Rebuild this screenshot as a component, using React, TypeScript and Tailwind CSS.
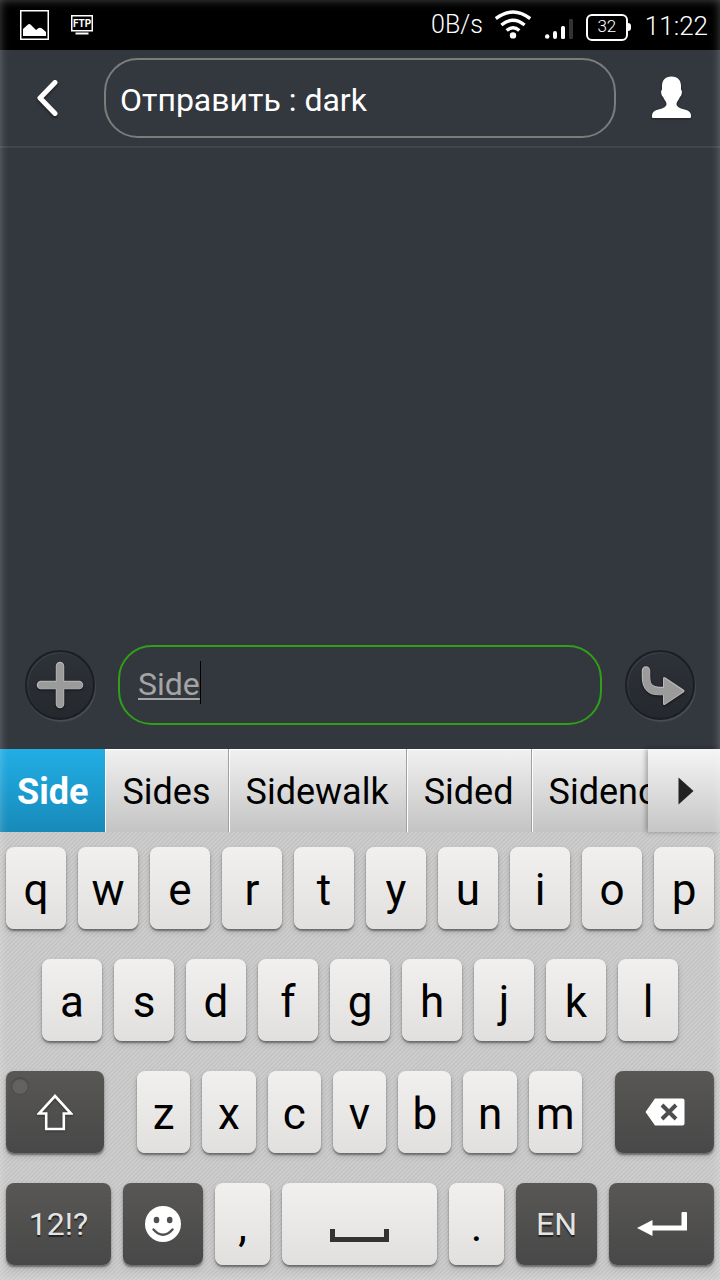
import type { ReactNode } from "react";

const LIGHT_KEY =
  "flex h-[82px] min-w-0 items-center justify-center rounded-lg bg-linear-to-b from-[#f1f0ef] to-[#e1e0df] text-[44px] leading-[52px] text-black shadow-[0_2px_2px_rgba(0,0,0,0.4),0_3px_6px_rgba(0,0,0,0.15)]";
const DARK_KEY =
  "relative flex h-[82px] min-w-0 items-center justify-center rounded-lg bg-linear-to-b from-[#585755] to-[#484848] text-[32px] text-[#e4e4e4] shadow-[0_2px_2px_rgba(0,0,0,0.4),0_3px_6px_rgba(0,0,0,0.15)]";

function Letter({ children }: { children: string }) {
  return (
    <button type="button" className={`${LIGHT_KEY} flex-1 pt-1`}>
      {children}
    </button>
  );
}

function DarkKey({ label, size, children }: { label: string; size: string; children: ReactNode }) {
  return (
    <button type="button" aria-label={label} className={`${DARK_KEY} ${size}`}>
      {children}
    </button>
  );
}

function StatusBar() {
  return (
    <div className="flex h-[50px] items-center justify-between bg-black pr-3 pl-5 text-white">
      <div className="flex items-center gap-[22px]">
        <svg width="29" height="30" viewBox="0 0 29 30" aria-hidden="true">
          <rect x="0.75" y="0.75" width="27.5" height="28.5" fill="none" stroke="#fff" strokeWidth="1.5" />
          <path d="M3 26V19L8 14.5Q9.5 13.5 11 15L16 20L18 18.5Q20 17 22 18.5L26 22V26Z" fill="#fff" />
        </svg>
        <svg width="22" height="20" viewBox="0 0 22 20" aria-label="FTP" role="img">
          <rect x="0.75" y="0.75" width="20.5" height="15" fill="none" stroke="#fff" strokeWidth="1.5" />
          <text x="11" y="12" textAnchor="middle" fontSize="10" fontWeight="700" fill="#fff" className="font-[Roboto,sans-serif]">
            FTP
          </text>
          <rect x="4.5" y="17.5" width="13" height="2" fill="#fff" />
        </svg>
      </div>
      <div className="flex items-center">
        <span className="text-[25px] font-light">0B/s</span>
        <svg className="ml-3" width="36" height="30" viewBox="0 0 36 30" fill="none" stroke="#fff" strokeWidth="3.4" aria-hidden="true">
          <path d="M0.8 8.6Q18 -4.6 35.2 8.6" />
          <path d="M6.4 15Q18 5.4 29.6 15" />
          <path d="M11.7 20.6Q18 14.8 24.3 20.6" />
          <circle cx="18" cy="25.4" r="3.2" fill="#fff" stroke="none" />
        </svg>
        <svg className="ml-[14px]" width="29" height="30" viewBox="0 0 29 30" aria-hidden="true">
          <circle cx="2.2" cy="26.5" r="2.2" fill="#fff" />
          <rect x="8" y="21" width="4" height="8" rx="2" fill="#fff" />
          <rect x="16" y="16" width="4" height="13" rx="1.5" fill="#fff" />
          <rect x="24" y="9" width="4" height="20" rx="1" fill="#333" />
        </svg>
        <div className="ml-[12px] flex items-center pt-1">
          <div className="flex h-[27px] w-[42px] items-center justify-center rounded-[6px] border-2 border-white text-[17px] font-light">
            32
          </div>
          <div className="h-2 w-[3px] rounded-r-sm bg-white" />
        </div>
        <span className="ml-[14px] pt-[2px] text-[26px] font-light">11:22</span>
      </div>
    </div>
  );
}

function Header() {
  return (
    <header className="flex h-[98px] items-center border-b-2 border-[#41454e]">
      <button type="button" aria-label="Назад" className="flex w-[104px] justify-center pr-[10px]">
        <svg width="26" height="40" viewBox="0 0 26 40" className="drop-shadow-[0_2px_1px_rgba(0,0,0,0.4)]">
          <path d="M21 4.5L6 20L21 35.5" fill="none" stroke="#fff" strokeWidth="5" strokeLinecap="round" strokeLinejoin="round" />
        </svg>
      </button>
      <input
        type="text"
        aria-label="Получатель"
        defaultValue="Отправить : dark"
        className="h-20 min-w-0 flex-1 rounded-[34px] border-2 border-[#7b7c7b] bg-transparent px-[14px] pt-1 text-[32px] text-white caret-transparent outline-none"
      />
      <button type="button" aria-label="Контакт" className="flex w-[104px] justify-center pl-[7px]">
        <svg width="40" height="44" viewBox="0 0 40 44" className="drop-shadow-[0_1px_1px_rgba(0,0,0,0.4)]">
          <path
            d="M19.5 0.5C26 0.5 29 4.5 29 10V13.5Q30.4 15 29.8 17.5Q29.3 20 28 20.8Q27 23.5 25 26Q24 28 24.8 29.5Q26 31.5 29 32.5L35 34.2Q39 36 39 39.5V40.8Q39 42 38 42H1Q0 42 0 40.8V39.5Q0 36 4 34.2L10 32.5Q13 31.5 14.2 29.5Q15 28 14 26Q12 23.5 11 20.8Q9.7 20 9.2 17.5Q8.6 15 10 13.5V10C10 4.5 13 0.5 19.5 0.5Z"
            fill="#fff"
          />
        </svg>
      </button>
    </header>
  );
}

const ROUND_BUTTON =
  "flex size-[70px] shrink-0 items-center justify-center rounded-full border-2 border-[#1b1f25] bg-linear-to-b from-[#2e3239] to-[#25282d] shadow-[1px_2px_1px_#484c53,inset_1px_1px_1px_#3c4047]";

function Composer() {
  return (
    <form className="flex items-center px-[25px] pb-6" onSubmit={(e) => e.preventDefault()}>
      <button type="button" aria-label="Добавить" className={ROUND_BUTTON}>
        <svg width="48" height="48" viewBox="0 0 48 48" className="drop-shadow-[0_1px_1px_rgba(0,0,0,0.6)]">
          <path d="M24 5V43M5 24H43" stroke="#b8b8b8" strokeWidth="8.5" strokeLinecap="round" />
          <path d="M24 5.5V43M5.5 24.3H43" stroke="#9b9b9b" strokeWidth="7" strokeLinecap="round" />
        </svg>
      </button>
      <div className="relative mx-[23px] min-w-0 flex-1">
        <input
          type="text"
          aria-label="Сообщение"
          defaultValue="Side"
          className="h-20 w-full rounded-[34px] border-2 border-[#30a016] bg-transparent px-[18px] pb-[3px] text-[32px] text-[#a5a5a5] underline decoration-2 underline-offset-[3px] caret-transparent outline-none"
        />
        <span className="absolute top-4 left-[82px] h-[43px] w-px bg-black" />
      </div>
      <button type="submit" aria-label="Отправить" className={ROUND_BUTTON}>
        <svg width="52" height="42" viewBox="0 0 52 42" className="drop-shadow-[0_1px_1px_rgba(0,0,0,0.6)]">
          <path d="M12 6.5V13Q12 27 25 27H31" fill="none" stroke="#b8b8b8" strokeWidth="8.5" strokeLinecap="round" />
          <path d="M29 14.5Q29 12 31.5 13.5L49.5 25.5Q51.5 27 49.5 28.5L31.5 40.5Q29 42 29 39.5Z" fill="#b8b8b8" />
          <path d="M12.3 7V13Q12.3 27.4 25 27.4H31" fill="none" stroke="#9b9b9b" strokeWidth="7" strokeLinecap="round" />
          <path d="M30 15.5Q30 14 31.5 15L48.5 26.5Q49.5 27.2 48.5 28L31.5 39.5Q30 40.5 30 39Z" fill="#9b9b9b" />
        </svg>
      </button>
    </form>
  );
}

function Suggestions() {
  const words = ["Sides", "Sidewalk", "Sided", "Sidenote"];
  return (
    <div className="flex h-[83px] bg-linear-to-b from-[#f1f1f1] to-[#c4c4c4] text-[36px] text-black">
      <div className="flex min-w-0 flex-1 overflow-hidden">
        <button type="button" className="shrink-0 bg-linear-to-b from-[#22aee5] to-[#178ab9] px-[17px] pt-[2px] font-bold text-white">
          Side
        </button>
        {words.map((word) => (
          <button
            key={word}
            type="button"
            className="shrink-0 border-r border-[#a0a0a0] px-[17px] pt-[2px] shadow-[inset_1px_1px_0_#fff]"
          >
            {word}
          </button>
        ))}
      </div>
      <button
        type="button"
        aria-label="More suggestions"
        className="relative flex w-[72px] shrink-0 items-center justify-center bg-linear-to-b from-[#f5f5f5] to-[#c6c6c6] pl-1 shadow-[-2px_0_5px_rgba(0,0,0,0.3)]"
      >
        <svg width="16" height="28" viewBox="0 0 16 28">
          <path d="M0.5 0.5L15.5 14L0.5 27.5Z" fill="#222" />
        </svg>
      </button>
    </div>
  );
}

function Keyboard() {
  return (
    <div className="flex flex-col gap-[30px] bg-[#c5c5c5] bg-[repeating-linear-gradient(135deg,#cdcdcd_0px,#cdcdcd_1px,#bfbfbf_2px,#cdcdcd_3px)] px-[6px] py-[15px]">
      <div className="flex gap-3">
        {Array.from("qwertyuiop", (c) => (
          <Letter key={c}>{c}</Letter>
        ))}
      </div>
      <div className="flex gap-3 px-9">
        {Array.from("asdfghjkl", (c) => (
          <Letter key={c}>{c}</Letter>
        ))}
      </div>
      <div className="flex gap-[33px]">
        <DarkKey label="Shift" size="flex-[98]">
          <span className="absolute top-[7px] left-[6px] size-4 rounded-full bg-[#636261] shadow-[inset_0_1px_1px_#444,0_0_0_1px_#4d4c4b]" />
          <svg width="36" height="37" viewBox="0 0 36 37" className="drop-shadow-[0_1px_1px_rgba(0,0,0,0.4)]">
            <path d="M18 2L34 19.5H26.8V35H9.2V19.5H2Z" fill="none" stroke="#fff" strokeWidth="2.6" />
          </svg>
        </DarkKey>
        <div className="flex min-w-0 flex-[445] gap-3">
          {Array.from("zxcvbnm", (c) => (
            <Letter key={c}>{c}</Letter>
          ))}
        </div>
        <DarkKey label="Backspace" size="flex-[99]">
          <svg width="40" height="28" viewBox="0 0 40 28">
            <path d="M10 0.5H37.5Q39.5 0.5 39.5 2.5V25.5Q39.5 27.5 37.5 27.5H10L0.5 14Z" fill="#fff" />
            <path d="M17 7L31 21M31 7L17 21" stroke="#4f4e4e" strokeWidth="4" />
          </svg>
        </DarkKey>
      </div>
      <div className="flex gap-3">
        <DarkKey label="12!?" size="flex-[105]">
          <span className="[text-shadow:0_2px_1px_#222]">12!?</span>
        </DarkKey>
        <DarkKey label="Emoji" size="flex-[80]">
          <svg width="36" height="36" viewBox="0 0 36 36">
            <circle cx="18" cy="18" r="18" fill="#fff" />
            <ellipse cx="11.5" cy="14" rx="2.8" ry="3.2" fill="#504f4e" />
            <ellipse cx="24.7" cy="14" rx="2.8" ry="3.2" fill="#504f4e" />
            <path d="M8.5 23.5Q18 34 27.5 23.5" fill="none" stroke="#504f4e" strokeWidth="2.4" strokeLinecap="round" />
          </svg>
        </DarkKey>
        <button type="button" className={`${LIGHT_KEY} flex-[55] pt-1`}>
          ,
        </button>
        <button type="button" aria-label="Space" className={`${LIGHT_KEY} flex-[155] pt-[22px]`}>
          <svg width="59" height="13" viewBox="0 0 59 13">
            <path d="M2.5 0V10.5H56.5V0" fill="none" stroke="#333" strokeWidth="5" />
          </svg>
        </button>
        <button type="button" className={`${LIGHT_KEY} flex-[55] pt-1`}>
          .
        </button>
        <DarkKey label="EN" size="flex-[81]">
          <span className="[text-shadow:0_2px_1px_#222]">EN</span>
        </DarkKey>
        <DarkKey label="Enter" size="flex-[105]">
          <svg width="50" height="26" viewBox="0 0 50 26">
            <path d="M0 17L15.5 9V14.5H44.5V2Q44.5 1 45.5 1H49Q50 1 50 2V19.5H15.5V25Z" fill="#fff" />
          </svg>
        </DarkKey>
      </div>
    </div>
  );
}

export default function App() {
  return (
    <div className="relative flex min-h-screen flex-col bg-[#33373e] font-[Roboto,'Noto_Sans',sans-serif]">
      <StatusBar />
      <Header />
      <main className="flex flex-1 flex-col justify-end">
        <Composer />
      </main>
      <Suggestions />
      <Keyboard />
      <div className="pointer-events-none absolute inset-0 shadow-[inset_0_0_10px_rgba(255,255,255,0.3)]" />
    </div>
  );
}
